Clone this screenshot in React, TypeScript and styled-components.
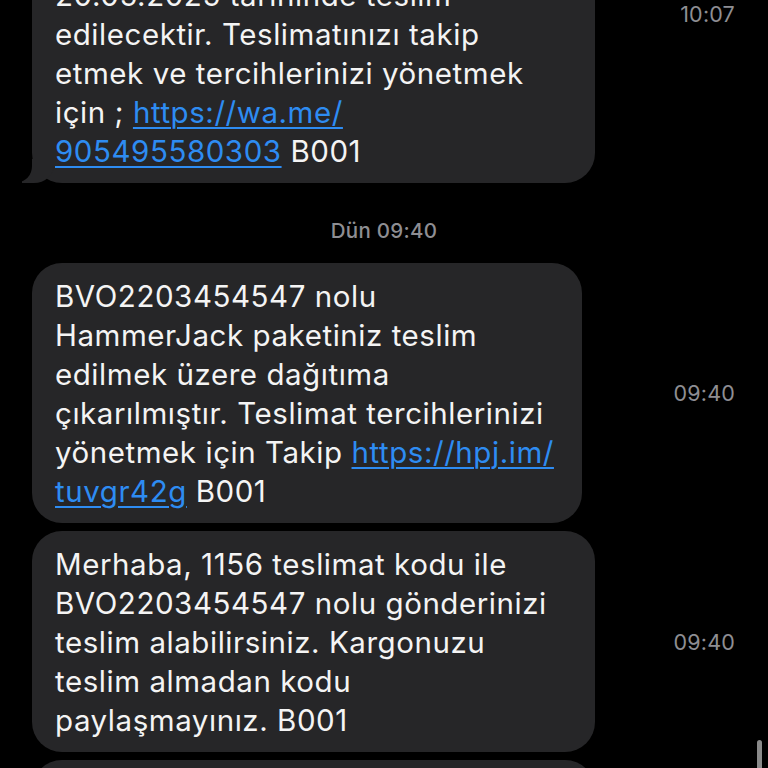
import React from "react";
import styled, { createGlobalStyle } from "styled-components";

const GlobalStyle = createGlobalStyle`
  html, body {
    margin: 0;
    padding: 0;
    background: #000;
    overflow: hidden;
  }
  body {
    font-family: Inter, "Noto Sans", sans-serif;
    -webkit-font-smoothing: antialiased;
  }
`;

const Screen = styled.div`
  position: relative;
  width: 768px;
  height: 768px;
  overflow: hidden;
  background: #000;
`;

const Thread = styled.div`
  display: flex;
  flex-direction: column;
  margin-top: -155px;
`;

const Row = styled.div<{ $gap?: number }>`
  display: flex;
  align-items: center;
  justify-content: space-between;
  padding: 0 33px 0 32px;
  margin-bottom: ${(p) => p.$gap ?? 8}px;
`;

const Bubble = styled.div<{ $width: number; $tail?: boolean }>`
  position: relative;
  box-sizing: border-box;
  width: ${(p) => p.$width}px;
  padding: 14px 10px 12px 23px;
  background: #262628;
  border-radius: 30px;
  color: #f4f4f4;
  font-size: 29.5px;
  line-height: 39px;
  letter-spacing: 0.55px;
  white-space: nowrap;

  ${(p) =>
    p.$tail &&
    `
    &::before {
      content: "";
      position: absolute;
      left: -10px;
      bottom: 0;
      width: 32px;
      height: 24px;
      background: #262628;
      border-bottom-right-radius: 20px 18px;
    }
    &::after {
      content: "";
      position: absolute;
      left: -16px;
      bottom: 1px;
      width: 16px;
      height: 24px;
      background: #000;
      border-bottom-right-radius: 14px 16px;
    }
  `}
`;

const Link = styled.span`
  color: #2e8cf2;
  text-decoration: underline;
  text-decoration-thickness: 2px;
  text-underline-offset: 4px;
`;

const Time = styled.span`
  color: #8e8e93;
  font-size: 21.5px;
  letter-spacing: 0.2px;
`;

const DateLabel = styled.div`
  text-align: center;
  color: #8e8e93;
  font-size: 20.5px;
  font-weight: 500;
  letter-spacing: 0.3px;
  padding: 35px 0 20px;
`;

const ScrollThumb = styled.div`
  position: absolute;
  right: 6px;
  top: 740px;
  width: 5px;
  height: 60px;
  border-radius: 3px;
  background: #8a8a8a;
`;

const Lines: React.FC<{ lines: React.ReactNode[] }> = ({ lines }) => (
  <>
    {lines.map((l, i) => (
      <div key={i}>{l}</div>
    ))}
  </>
);

export default function App() {
  return (
    <Screen>
      <GlobalStyle />
      <Thread>
        <Row $gap={0}>
          <Bubble $width={563} $tail>
            <Lines
              lines={[
                "Sayın müşterimiz,",
                "BVO2203454547 nolu",
                "HammerJack gönderiniz",
                "20.05.2025 tarihinde teslim",
                "edilecektir. Teslimatınızı takip",
                "etmek ve tercihlerinizi yönetmek",
                <>
                  için ; <Link>https://wa.me/</Link>
                </>,
                <>
                  <Link>905495580303</Link> B001
                </>,
              ]}
            />
          </Bubble>
          <Time>10:07</Time>
        </Row>

        <DateLabel>Dün 09:40</DateLabel>

        <Row>
          <Bubble $width={550}>
            <Lines
              lines={[
                "BVO2203454547 nolu",
                "HammerJack paketiniz teslim",
                "edilmek üzere dağıtıma",
                "çıkarılmıştır. Teslimat tercihlerinizi",
                <>
                  yönetmek için Takip <Link>https://hpj.im/</Link>
                </>,
                <>
                  <Link>tuvgr42g</Link> B001
                </>,
              ]}
            />
          </Bubble>
          <Time>09:40</Time>
        </Row>

        <Row>
          <Bubble $width={563}>
            <Lines
              lines={[
                "Merhaba, 1156 teslimat kodu ile",
                "BVO2203454547 nolu gönderinizi",
                "teslim alabilirsiniz. Kargonuzu",
                "teslim almadan kodu",
                "paylaşmayınız. B001",
              ]}
            />
          </Bubble>
          <Time>09:40</Time>
        </Row>

        <Row>
          <Bubble $width={563}>
            <Lines lines={["Sayın müşterimiz, gönderiniz", "teslim edilmiştir. B001"]} />
          </Bubble>
          <Time>09:41</Time>
        </Row>
      </Thread>
      <ScrollThumb />
    </Screen>
  );
}
